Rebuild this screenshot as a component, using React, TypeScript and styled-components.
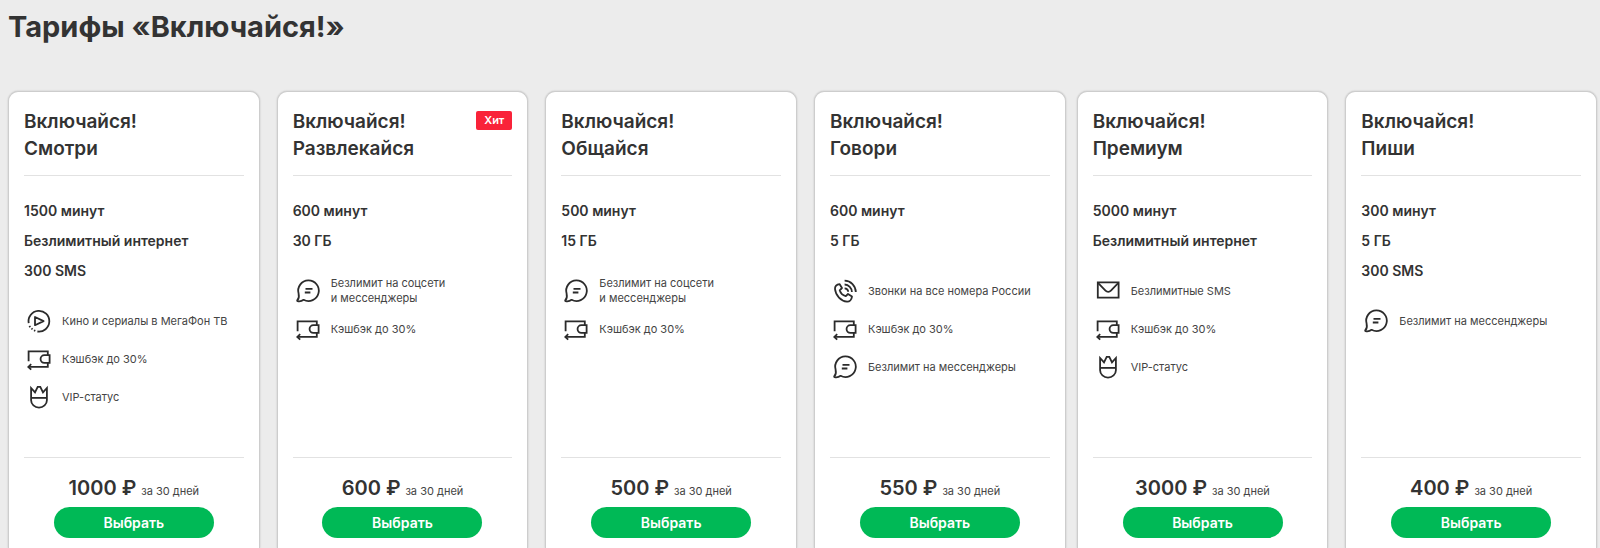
import React from 'react';
import styled, { createGlobalStyle } from 'styled-components';

const GlobalStyle = createGlobalStyle`
  *, *::before, *::after { box-sizing: border-box; }
  body {
    margin: 0;
    background: #ececec;
    color: #333;
    font-family: Inter, Roboto, "Liberation Sans", sans-serif;
  }
`;

type IconName = 'play' | 'cashback' | 'vip' | 'chat' | 'phone' | 'mail';

interface Feature {
  icon: IconName;
  lines: string[];
}

interface Tariff {
  name: string;
  hit?: boolean;
  specs: string[];
  features: Feature[];
  price: string;
}

const cashback: Feature = { icon: 'cashback', lines: ['Кэшбэк до 30%'] };
const vip: Feature = { icon: 'vip', lines: ['VIP-статус'] };
const messengers: Feature = { icon: 'chat', lines: ['Безлимит на мессенджеры'] };
const social: Feature = { icon: 'chat', lines: ['Безлимит на соцсети', 'и мессенджеры'] };

const mainTariffs: Tariff[] = [
  {
    name: 'Смотри',
    specs: ['1500 минут', 'Безлимитный интернет', '300 SMS'],
    features: [{ icon: 'play', lines: ['Кино и сериалы в МегаФон ТВ'] }, cashback, vip],
    price: '1000 ₽',
  },
  {
    name: 'Развлекайся',
    hit: true,
    specs: ['600 минут', '30 ГБ'],
    features: [social, cashback],
    price: '600 ₽',
  },
  {
    name: 'Общайся',
    specs: ['500 минут', '15 ГБ'],
    features: [social, cashback],
    price: '500 ₽',
  },
  {
    name: 'Говори',
    specs: ['600 минут', '5 ГБ'],
    features: [{ icon: 'phone', lines: ['Звонки на все номера России'] }, cashback, messengers],
    price: '550 ₽',
  },
];

const extraTariffs: Tariff[] = [
  {
    name: 'Премиум',
    specs: ['5000 минут', 'Безлимитный интернет'],
    features: [{ icon: 'mail', lines: ['Безлимитные SMS'] }, cashback, vip],
    price: '3000 ₽',
  },
  {
    name: 'Пиши',
    specs: ['300 минут', '5 ГБ', '300 SMS'],
    features: [messengers],
    price: '400 ₽',
  },
];

const Page = styled.main`
  display: flex;
  flex-direction: column;
  min-height: 100vh;
  padding: 9px 3px 0 8px;
`;

const Title = styled.h1`
  margin: 0 0 46px;
  font-size: 29px;
  font-weight: 700;
  line-height: 36px;
`;

const Groups = styled.div`
  flex: 1;
  display: flex;
  gap: 11px;
`;

const Group = styled.section<{ $count: number }>`
  flex: ${({ $count }) => $count} 1 ${({ $count }) => ($count - 1) * 17}px;
  display: grid;
  grid-template-columns: repeat(${({ $count }) => $count}, minmax(0, 1fr));
  gap: 17px;
`;

const Card = styled.article`
  display: flex;
  flex-direction: column;
  padding: 16px 15px 8px;
  background: #fff;
  border: 1px solid #cdcdcd;
  border-bottom: 0;
  border-radius: 10px 10px 0 0;
  box-shadow: 0 0 2px rgba(0, 0, 0, 0.2);
`;

const CardHeader = styled.header`
  display: flex;
  justify-content: space-between;
  align-items: flex-start;
  padding-bottom: 13px;
  border-bottom: 1px solid #e2e2e2;
`;

const CardTitle = styled.h2`
  margin: 0;
  font-size: 19px;
  font-weight: 600;
  line-height: 27px;
`;

const Badge = styled.span`
  margin-top: 3px;
  padding: 0 8px;
  border-radius: 2px;
  background: #f92339;
  color: #fff;
  font-size: 11px;
  font-weight: 600;
  line-height: 19px;
`;

const CardBody = styled.div`
  min-height: 281px;
  padding-top: 20px;
`;

const List = styled.ul`
  margin: 0;
  padding: 0;
  list-style: none;
`;

const Spec = styled.li`
  font-size: 14px;
  font-weight: 600;
  line-height: 30px;
`;

const FeatureList = styled(List)`
  display: grid;
  gap: 8px;
  padding-top: 20px;
`;

const FeatureItem = styled.li`
  display: flex;
  align-items: center;
  gap: 8px;
  min-height: 30px;
  font-size: 11px;
  line-height: 15px;
  color: #444;
`;

const FeatureLine = styled.span`
  display: block;
`;

const IconSvg = styled.svg`
  flex: none;
  width: 30px;
  height: 30px;
  fill: none;
  stroke: #2b2b2b;
  stroke-width: 1.8;
`;

const CardFooter = styled.footer`
  display: flex;
  flex-direction: column;
  align-items: center;
  padding-top: 18px;
  border-top: 1px solid #e2e2e2;
`;

const PriceRow = styled.p`
  display: flex;
  align-items: baseline;
  gap: 5px;
  margin: 0 0 7px;
`;

const Price = styled.strong`
  font-size: 20px;
  font-weight: 600;
  line-height: 24px;
`;

const Period = styled.span`
  font-size: 11px;
  line-height: 15px;
  color: #444;
`;

const SelectButton = styled.button`
  width: 160px;
  max-width: 100%;
  height: 31px;
  padding: 0;
  border: 0;
  border-radius: 16px;
  background: #00b956;
  color: #fff;
  font: 600 14px/31px Inter, Roboto, "Liberation Sans", sans-serif;
  cursor: pointer;
`;

const icons: Record<IconName, React.ReactNode> = {
  play: (
    <>
      <path d="M4.7 17.2A10.4 10.4 0 1 1 13.4 25.5" />
      <path d="M5.4 19.9l.8 1.3M7.5 22.4l1 .9M10 24.3l1.3.6" />
      <path d="M11 11v8.2l8.6-4.1z" strokeLinejoin="round" />
    </>
  ),
  cashback: (
    <>
      <path d="M4.6 17.2V7.4h19.2v3.8M23.8 18.9v4H4.6" />
      <path d="M25.6 11.2h-5.2a3.8 3.8 0 0 0 0 7.7h5.2z" />
      <path d="M7.2 20.1l-2.9 2.8 2.9 2.8" />
    </>
  ),
  vip: (
    <>
      <path d="M7.1 6v12.2a7.9 7.4 0 0 0 15.8 0V6l-3.9 4.4-2.7-5.5h-2.6L11 10.4z" />
      <path d="M7.1 15.9h15.8" />
    </>
  ),
  chat: (
    <>
      <path
        d="M5.6 17.6A10.3 10.3 0 1 1 10.6 23.8C8.8 25.2 6.3 25.6 4.6 25.2c-.6-.2-.5-.8-.1-1.2C5.9 22.6 6.1 20 5.6 17.6z"
        strokeLinejoin="round"
      />
      <path d="M12.5 12.8h7M11.8 16.5h5.6" />
    </>
  ),
  phone: (
    <>
      <path
        d="M9.5 8.1L12 12l-2.3 2.3c.8 2.7 3.2 5.1 6.1 5.9L18 18l4 2.6c-.4 2.9-2.5 5.2-5 5C11 25 5.6 19.5 5 13c-.2-2.5 1.6-4.7 4.5-4.9z"
        strokeLinejoin="round"
      />
      <path d="M14.6 4.6A11.4 11.4 0 0 1 25.8 16M14.6 8.5A7.5 7.5 0 0 1 21.9 16M14.6 12.3A3.7 3.7 0 0 1 18.2 15.8" />
    </>
  ),
  mail: (
    <>
      <path d="M4.8 6.4h20.8v15.3H4.8z" />
      <path d="M5 6.8l7.5 7.8c1.5 1.5 3.9 1.5 5.4 0l7.5-7.8" />
    </>
  ),
};

function TariffCard({ tariff }: { tariff: Tariff }) {
  return (
    <Card>
      <CardHeader>
        <CardTitle>
          Включайся!
          <br />
          {tariff.name}
        </CardTitle>
        {tariff.hit && <Badge>Хит</Badge>}
      </CardHeader>
      <CardBody>
        <List>
          {tariff.specs.map((spec) => (
            <Spec key={spec}>{spec}</Spec>
          ))}
        </List>
        <FeatureList>
          {tariff.features.map((feature) => (
            <FeatureItem key={feature.lines[0]}>
              <IconSvg viewBox="0 0 30 30" aria-hidden="true">
                {icons[feature.icon]}
              </IconSvg>
              <div>
                {feature.lines.map((line) => (
                  <FeatureLine key={line}>{line}</FeatureLine>
                ))}
              </div>
            </FeatureItem>
          ))}
        </FeatureList>
      </CardBody>
      <CardFooter>
        <PriceRow>
          <Price>{tariff.price}</Price>
          <Period>за 30 дней</Period>
        </PriceRow>
        <SelectButton type="button">Выбрать</SelectButton>
      </CardFooter>
    </Card>
  );
}

export default function App() {
  return (
    <>
      <GlobalStyle />
      <Page>
        <Title>Тарифы «Включайся!»</Title>
        <Groups>
          <Group $count={4}>
            {mainTariffs.map((tariff) => (
              <TariffCard key={tariff.name} tariff={tariff} />
            ))}
          </Group>
          <Group $count={2}>
            {extraTariffs.map((tariff) => (
              <TariffCard key={tariff.name} tariff={tariff} />
            ))}
          </Group>
        </Groups>
      </Page>
    </>
  );
}
